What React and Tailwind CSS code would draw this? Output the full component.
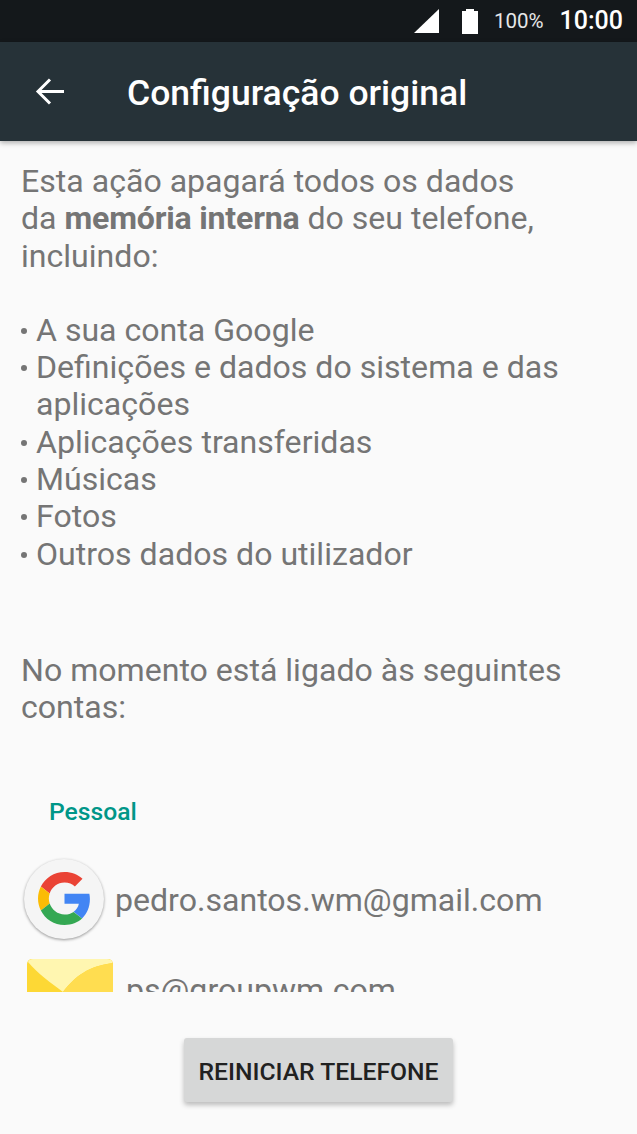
import React from 'react';

const bullets = [
  ['A sua conta Google'],
  ['Definições e dados do sistema e das', 'aplicações'],
  ['Aplicações transferidas'],
  ['Músicas'],
  ['Fotos'],
  ['Outros dados do utilizador'],
];

const GoogleG = () => (
  <svg viewBox="0 0 48 48" className="w-[53px] h-[53px]">
    <path fill="#EA4335" d="M24 9.5c3.9 0 7 1.4 9.4 3.6l6.9-6.9C36.1 2.4 30.6 0 24 0 14.6 0 6.5 5.4 2.6 13.2l8 6.2C12.5 13.6 17.800 9.500 24 9.500z" />
    <path fill="#4285F4" d="M47 24.500c0-1.700-.2-3.300-.5-4.800H24v9.100h13c-.6 3-2.300 5.500-4.800 7.200l7.700 6C44.400 37.800 47 31.700 47 24.500z" />
    <path fill="#FBBC05" d="M10.600 28.600C10.100 27.200 9.800 25.600 9.800 24s.3-3.200.8-4.600l-8-6.200C1 16.400 0 20.100 0 24s1 7.600 2.600 10.800l8-6.200z" />
    <path fill="#34A853" d="M24 48c6.500 0 11.900-2.100 15.900-5.800l-7.700-6c-2.200 1.500-4.900 2.300-8.200 2.300-6.200 0-11.500-4.200-13.400-9.900l-8 6.200C6.500 42.600 14.600 48 24 48z" />
  </svg>
);

const EmailIcon = () => (
  <svg viewBox="0 0 86 70" className="w-[86px] h-[70px] block">
    <rect x="0" y="0" width="86" height="70" rx="5" fill="#FDD835" />
    <path d="M1 3Q2 0 6 0h74q5 0 5.500 4C62 7 48 17 36 33 24 24 10 14 1 3z" fill="#FFF6B0" />
    <path d="M36 33C48 17 62 7 86 4v66H18z" fill="#FFDD50" />
  </svg>
);

export default function App() {
  return (
    <div className="w-[637px] h-[1134px] flex flex-col bg-[#fafafa] font-['Roboto',sans-serif] overflow-hidden">
      {/* status bar */}
      <div className="h-[42px] bg-[#14181b] flex items-center justify-end pr-[14px] text-white">
        <svg viewBox="0 0 26 24" className="w-[26px] h-[24px] mr-[21px]">
          <path d="M25 0v24H0z" fill="#fff" />
        </svg>
        <svg viewBox="0 0 18 26" className="w-[18px] h-[26px] mr-[15px] -mt-[1px]">
          <path d="M5 1h8v2h4v23H1V3h4z" fill="#fff" />
        </svg>
        <span className="text-[20.500px] text-[#e6e7e8] mr-[16px]">100%</span>
        <span className="text-[25px] font-medium">10:00</span>
      </div>

      {/* toolbar */}
      <div className="h-[99px] bg-[#263238] flex items-center shadow-[0_2px_5px_rgba(0,0,0,0.3)] z-10 text-white">
        <svg viewBox="0 0 30 30" className="w-[30px] h-[30px] ml-[35px] mr-[62px]" fill="none" stroke="#fff" strokeWidth="3">
          <path d="M29 14.500H3M15 2.500 3 14.500l12 12" />
        </svg>
        <span className="text-[35.500px] font-medium pt-[5px]">Configuração original</span>
      </div>

      {/* content */}
      <div className="h-[851px] overflow-hidden pl-[21px] pt-[22px] text-[32.100px] leading-[37.300px] text-[#757575]">
        <p>Esta ação apagará todos os dados</p>
        <p>da <span className="font-bold tracking-[-0.2px]">memória interna</span> do seu telefone,</p>
        <p>incluindo:</p>

        <div className="mt-[37px]">
          {bullets.map((lines) => (
            <div key={lines[0]} className="flex">
              <span className="w-[15px] shrink-0 flex items-start pt-[16px]">
                <span className="w-[6px] h-[6px] rounded-full bg-[#757575]" />
              </span>
              <div>
                {lines.map((l) => (
                  <p key={l}>{l}</p>
                ))}
              </div>
            </div>
          ))}
        </div>

        <div className="mt-[79px]">
          <p>No momento está ligado às seguintes</p>
          <p>contas:</p>
        </div>

        <p className="mt-[66px] ml-[28px] text-[24.700px] font-medium text-[#009688]">Pessoal</p>

        <div className="mt-[29px] flex items-center">
          <div className="w-[80px] h-[80px] ml-[3px] rounded-full bg-[#f5f5f5] shadow-[0_1px_3px_rgba(0,0,0,0.4)] flex items-center justify-center">
            <GoogleG />
          </div>
          <span className="ml-[11px] pt-[4px]">pedro.santos.wm@gmail.com</span>
        </div>

        <div className="mt-[20px] flex items-start">
          <div className="ml-[6px]">
            <EmailIcon />
          </div>
          <span className="ml-[13px] mt-[13px]">ps@groupwm.com</span>
        </div>
      </div>

      {/* bottom button */}
      <div className="flex-1 flex justify-center pt-[46px]">
        <button className="w-[269px] h-[64px] pt-[3px] rounded-[3px] bg-[#d6d7d7] shadow-[0_3px_5px_rgba(0,0,0,0.25)] text-[24.700px] font-medium text-[#212121]">
          REINICIAR TELEFONE
        </button>
      </div>
    </div>
  );
}
